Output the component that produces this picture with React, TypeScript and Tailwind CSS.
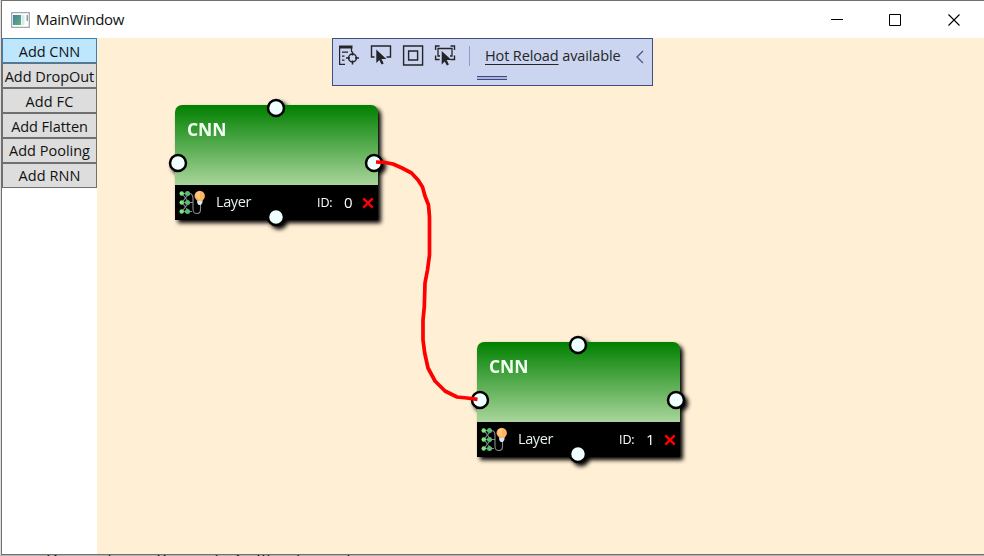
import React from 'react';

const layers = [
  { label: 'Add CNN', spacing: 'pt-[2px] tracking-[-0.02px]', first: true },
  { label: 'Add DropOut', spacing: 'pt-[2px] tracking-[-0.05px]' },
  { label: 'Add FC', spacing: 'pt-[2px] tracking-[0.1px]' },
  { label: 'Add Flatten', spacing: 'pt-[2px] tracking-[-0.05px]' },
  { label: 'Add Pooling', spacing: 'pt-0 tracking-[0px]' },
  { label: 'Add RNN', spacing: 'pt-0 tracking-[0.1px]' },
];

function Port({ place }: { place: string }) {
  return (
    <svg className={`absolute size-[20px] ${place}`} viewBox="0 0 20 20">
      <circle cx="10" cy="10" r="8" fill="#f0ffff" stroke="#000" strokeWidth="2.500" />
    </svg>
  );
}

function NetworkIcon() {
  return (
    <svg className="ml-[4px] h-[26px] w-[27px] shrink-0" viewBox="0 0 27 26" fill="none">
      <g stroke="#848b92" strokeWidth="1.1">
        <path d="M3 3.500h7L3 12.500l7 9H3l7-9H3l7-9M3 3.500l7 9M3 21.500l7-9M10 3.500c3 0 4 1.500 4 5v10c0 4 1 5 4 5s3.500-1.500 3.500-4v-5M10 12.500h4M10 21.500h3" />
      </g>
      <g fill="#7be67b">
        <circle cx="2.700" cy="3.500" r="2.200" /><circle cx="2.700" cy="12.500" r="2.200" /><circle cx="2.700" cy="21.500" r="2.200" />
      </g>
      <g fill="#58bd74">
        <circle cx="8.500" cy="3.500" r="2.500" /><circle cx="8.500" cy="12.500" r="2.500" /><circle cx="8.500" cy="21.500" r="2.500" />
      </g>
      <path d="M15.500 6a5.200 5.200 0 0 1 10.400 0c0 2.500-2 3.500-2.600 5.500h-4.600C18 9.500 15.500 8.500 15.500 6Z" fill="#ffb45f" />
      <path d="M17 5a3 3 0 0 1 4-3v7c-2-1-4-2-4-4" fill="#ffc98a" />
      <path d="M18.200 11h5.200v2l-1.500 2h-2.200l-1.500-2z" fill="#d3e7f7" />
    </svg>
  );
}

function LayerNode({ id, place }: { id: number; place: string }) {
  return (
    <div className={`absolute h-[115px] w-[203px] [filter:drop-shadow(3.5px_3.5px_2px_#000)] ${place}`}>
      <div className="h-[80px] rounded-t-[7px] bg-[linear-gradient(to_bottom,#008000,#a9d59b)] pt-[12px] pl-[12.5px]">
        <div className="w-[42px] text-[17.5px] leading-[24px] font-bold tracking-[-0.1px] text-[#f4fff4]">CNN</div>
      </div>
      <div className="flex h-[35px] items-center bg-black text-white">
        <NetworkIcon />
        <span className="mb-[1px] ml-[10.5px] w-[101px] text-[14.5px] tracking-[-0.4px] text-[#e4eeee]">Layer</span>
        <span className="mt-[2px] w-[27px] text-[12.5px] tracking-[-0.1px]">ID:</span>
        <span className="w-[17.500px] text-[15px]">{id}</span>
        <svg className="mt-[1px] size-[12px] shrink-0" viewBox="0 0 12 12">
          <path d="M1.300 1.300L10.700 10.700M10.700 1.300L1.300 10.700" stroke="#f00" strokeWidth="2.400" />
        </svg>
      </div>
      <Port place="left-[91px] top-[-7px]" />
      <Port place="left-[-7px] top-[47.500px]" />
      <Port place="left-[189px] top-[47.500px]" />
      <Port place="left-[91px] top-[102px]" />
    </div>
  );
}

function DebugBar() {
  return (
    <div className="absolute top-0 left-[235px] h-[48px] w-[321px] border border-[#414c80] bg-[#cbd5ef] text-[#252529]">
      <div className="flex h-[34px] items-center pl-[6px]">
        <svg className="-mt-[2px] h-[22px] w-[118px] shrink-0" viewBox="0 0 118 22" fill="none" stroke="#252529" strokeWidth="1.250">
          <path d="M0 1.500h13.500v3H0z" fill="#252529" stroke="none" />
          <path d="M.6 4v16.400H6M3 8h6M3 12h2.500M3 16h2.500M12.500 4v4" />
          <circle cx="13.500" cy="14" r="3.900" strokeWidth="1.500" />
          <path d="M13.500 7.500v4M13.500 16.500v4M7 14h4M16 14h4" strokeWidth="1.500" />
          <path d="M35.500 13h-3V2h19v11h-4" strokeWidth="1.400" />
          <path d="M37.300 5.500v13.500l3-3 2.200 4.500 2.200-1-2.200-4.500h4.800Z" fill="#252529" stroke="none" />
          <path d="M64.600 2h19v19h-19zM69.600 7h9v9h-9z" strokeWidth="1.400" />
          <path d="M96.600 6V2h4M111.500 2h4v4M96.600 11.500v4h4M111.500 15.500h4v-4" strokeWidth="1.400" />
          <path d="M101 12h-2V4.500h14V12h-2" strokeWidth="1.300" />
          <path d="M102.700 7v13.500l3-3 2.200 4 2-1-2.200-4.500h4.800Z" fill="#252529" stroke="none" />
        </svg>
        <div className="-mt-[1px] ml-[12px] h-[20px] w-px bg-[#929dcb]" />
        <div className="ml-[15px] w-[136px] whitespace-nowrap text-[14.5px] tracking-[-0.12px]">
          <span className="underline decoration-1 underline-offset-[3px]">Hot Reload</span> available
        </div>
        <svg className="mt-[1px] ml-[15px] h-[14px] w-[8px]" viewBox="0 0 8 14" fill="none">
          <path d="M7 1L1 7l6 6" stroke="#4c568b" strokeWidth="1.300" />
        </svg>
      </div>
      <div className="mt-[3px] ml-[144px] h-[4px] w-[30px] border-y border-[#3d497e] bg-[#a9b4dd]" />
    </div>
  );
}

export default function App() {
  return (
    <div className="flex h-[556px] w-[984px] flex-col overflow-hidden bg-[#dedede] font-['Open_Sans','Noto_Sans',sans-serif] text-[#111]">
      <div className="ml-[1px] flex h-[555px] shrink-0 flex-col border-t border-b border-l border-[#707070] bg-white">
        <header className="flex h-[37px] shrink-0 items-center">
          <svg className="ml-[9px] h-[16px] w-[19px]" viewBox="0 0 19 16">
            <defs>
              <linearGradient id="pane" x1="0" y1="0" x2="1" y2="1">
                <stop stopColor="#4778a8" />
                <stop offset="1" stopColor="#5fb873" />
              </linearGradient>
            </defs>
            <path d="M.7.7h17.600v14.600H.7z" fill="#fff" stroke="#a3a8ac" strokeWidth="1.300" />
            <path d="M2 3h8v10H2z" fill="url(#pane)" />
            <path d="M10.500 3h3v10h-3z" fill="#e1e7e9" />
            <path d="M15.500 3h1.500v6h-1.500z" fill="#75a89f" />
          </svg>
          <span className="ml-[6px] w-[90px] text-[15px] tracking-[-0.35px]">MainWindow</span>
          <svg className="mr-[24px] mb-[2px] ml-auto h-[14px] w-[130px]" viewBox="0 0 130 14" fill="none" stroke="#000">
            <path d="M1 7.500h12M59.500 2.500h11v11h-11z" />
            <path d="M118.500 2.500l11 11M129.500 2.500l-11 11" strokeWidth="1.100" />
          </svg>
        </header>
        <div className="flex min-h-0 flex-1">
          <aside className="w-[95px] shrink-0 bg-white">
            {layers.map(({ label, spacing, first }) => (
              <button
                key={label}
                className={`flex h-[25px] w-[95px] items-center justify-center border text-[14.5px] leading-[20px] whitespace-nowrap ${spacing} ${first ? 'border-[#3c7fb1] bg-[#bee6fd]' : 'border-[#707070] bg-[#dddddd]'}`}
              >
                {label}
              </button>
            ))}
          </aside>
          <main className="relative min-w-0 flex-1 bg-[#ffefd5]">
            <DebugBar />
            <LayerNode id={0} place="left-[77.500px] top-[67px]" />
            <LayerNode id={1} place="left-[379.500px] top-[304px]" />
            <svg className="absolute top-0 left-0 h-[516px] w-[887px]" viewBox="97 38 887 516" fill="none">
              <path
                d="M376 162L385 162.500 393 164 402 168 411.500 173 418 180 422.500 187 425 196 428.500 205 429.500 217V255L427.500 270 425 283 424.300 307 423 320V340L424.700 353 428 368 435 381 445 391 457 397 467 398 477.500 399.300"
                stroke="#f00"
                strokeWidth="3.700"
                strokeLinejoin="round"
              />
            </svg>
          </main>
        </div>
      </div>
      <div className="h-px shrink-0 overflow-hidden bg-[#b5b5b5] pl-[46px] text-[17px] leading-[8px] tracking-[0.6px] whitespace-nowrap">
        <span className="block">Dependency Property Callbacks and</span>
      </div>
    </div>
  );
}
